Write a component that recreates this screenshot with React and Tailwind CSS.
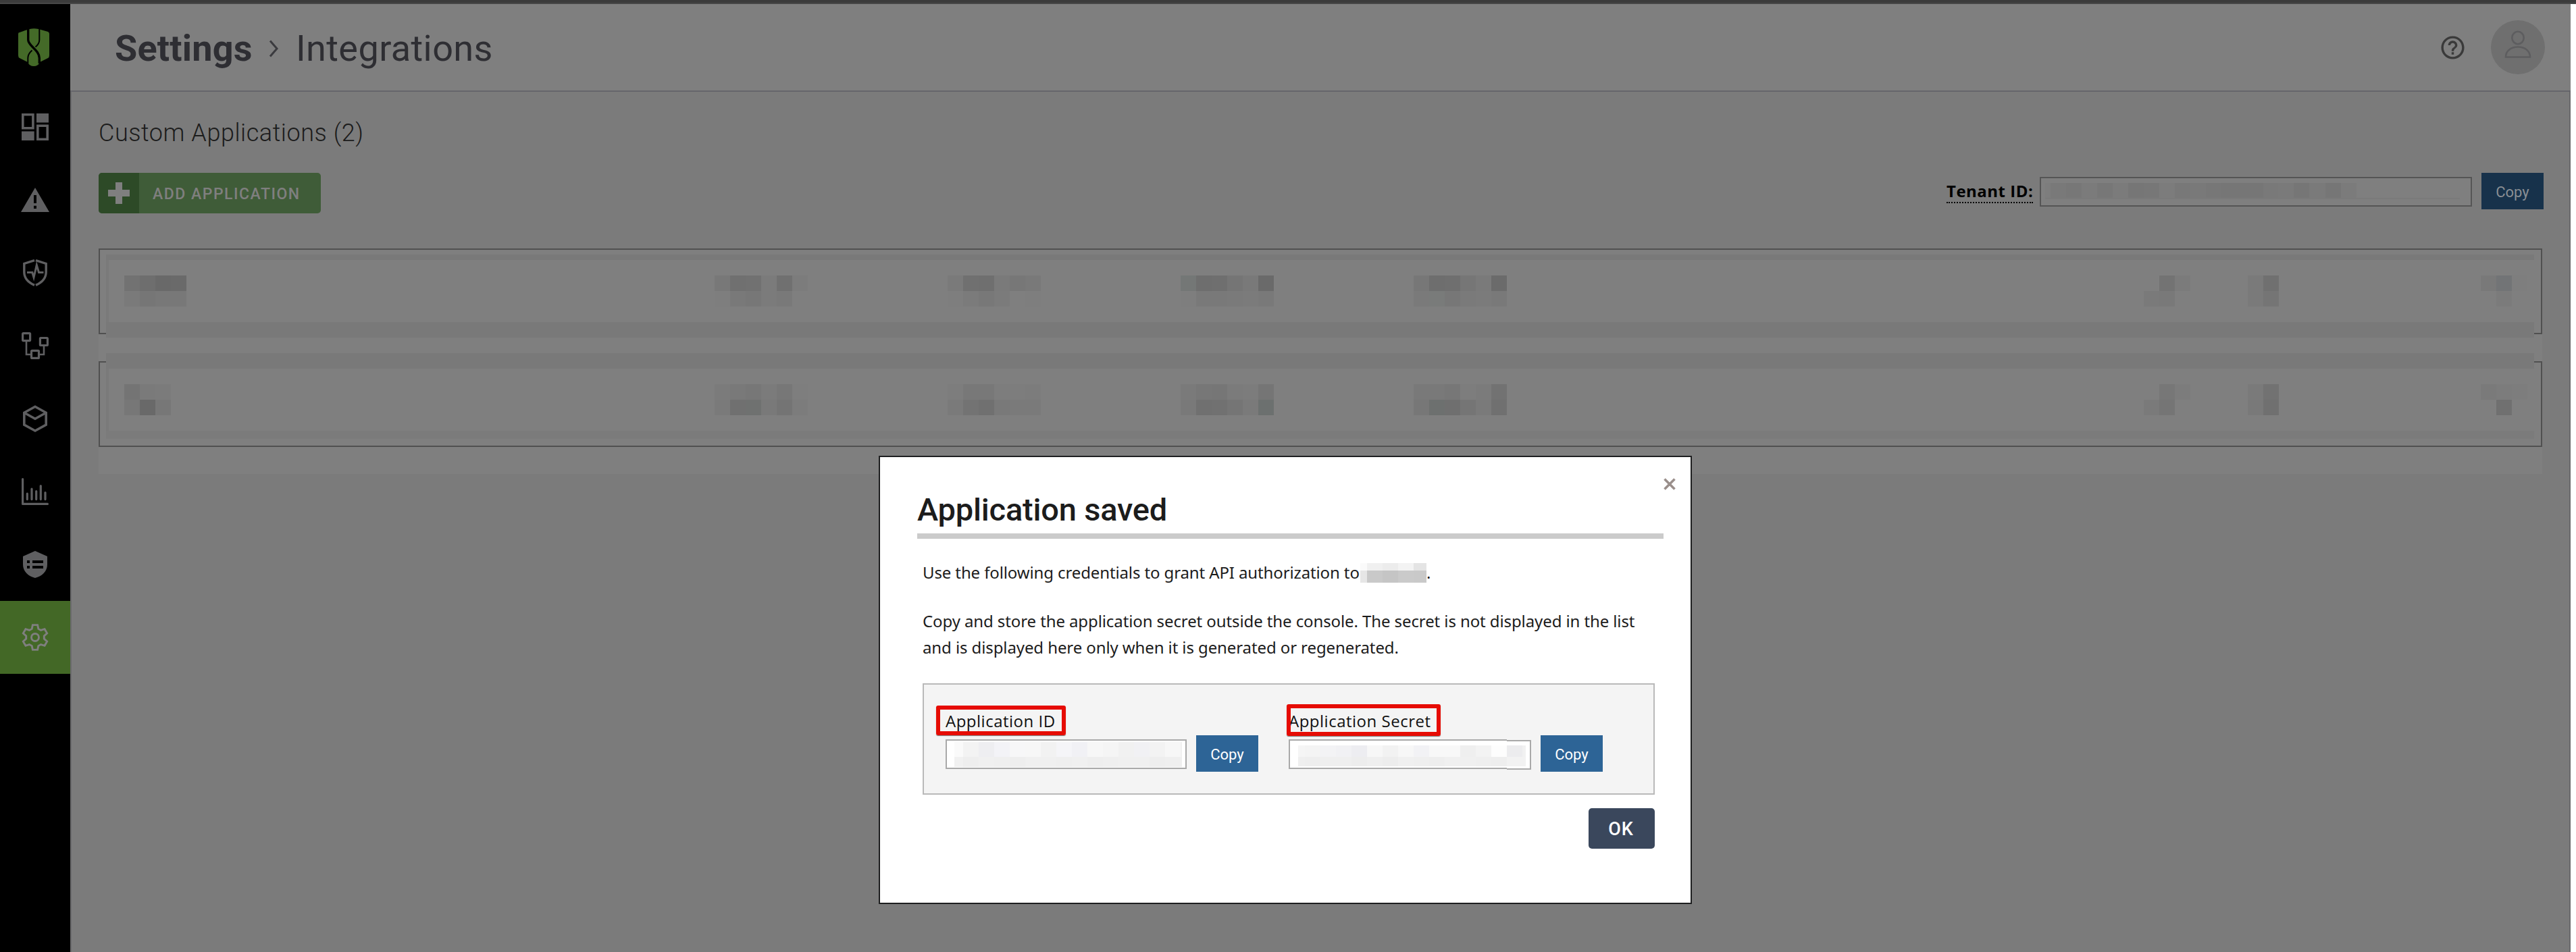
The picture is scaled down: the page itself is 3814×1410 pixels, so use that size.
import React, { useState } from 'react';
import { MdHelpOutline } from 'react-icons/md';

const COPY_FONT = "font-['Roboto',sans-serif]";

// Sidebar icons, all on a 48x48 grid
const navItems = [
  {
    name: 'dashboard',
    icon: (
      <>
        <path d="M4 30.5h18.7V44H4zM26 4h18v13.5H26z" fill="currentColor" />
        <path d="M5.8 5.8h15.1v20H5.8zM27.8 22.3h14.4v20H27.8z" fill="none" stroke="currentColor" strokeWidth="3.6" />
      </>
    ),
  },
  {
    name: 'alerts',
    icon: <path d="M24 6l21 36H3zM22 17v12h4V17zM22 32.8v4.2h4v-4.2z" fill="currentColor" fillRule="evenodd" />,
  },
  {
    name: 'enforce',
    icon: (
      <g fill="none" stroke="currentColor" strokeWidth="3.4">
        <path d="M23 5.6L7.8 10.4V23c0 9 6.5 15.5 15.2 19.4M25 5.6l15.2 4.8V23c0 9-6.5 15.5-15.2 19.4" />
        <path d="M12 23.6h7.8L22 31l4.3-18.5L29.5 23.6H36.5" strokeWidth="3" />
      </g>
    ),
  },
  {
    name: 'inbox',
    icon: (
      <g fill="none" stroke="currentColor" strokeWidth="3.2">
        <rect x="5.6" y="5.6" width="11" height="11" rx="1" />
        <rect x="31.4" y="12.5" width="11" height="11" rx="1" />
        <rect x="18.5" y="31.4" width="11" height="11" rx="1" />
        <path d="M11 17v20h7M37 24v13h-7" strokeWidth="2.6" />
      </g>
    ),
  },
  {
    name: 'inventory',
    icon: (
      <path
        d="M24 6.2l16.2 9v17.9L24 42 7.8 33.1V15.2zM7.8 15.2L24 24.2l16.2-9"
        fill="none"
        stroke="currentColor"
        strokeWidth="3.6"
      />
    ),
  },
  {
    name: 'reports',
    icon: (
      <path
        d="M5.6 5.6v36.8h36.8M12.3 27.2v8.4M19 20.2v15.4M25.7 23.6v12M32.3 15.6v20M39 25.6v10"
        fill="none"
        stroke="currentColor"
        strokeWidth="3.2"
        strokeLinecap="round"
        strokeLinejoin="round"
      />
    ),
  },
  {
    name: 'policies',
    icon: (
      <path
        d="M24 4l18 8v12c0 10-7.5 17.5-18 20C13.5 41.5 6 34 6 24V12zM12 18v4h4v-4zM20 18v4h16v-4zM12 26v4h4v-4zM20 26v4h16v-4z"
        fill="currentColor"
        fillRule="evenodd"
      />
    ),
  },
  {
    name: 'settings',
    active: true,
    icon: (
      <g fill="none" stroke="currentColor" strokeWidth="2.9" transform="translate(24 24)">
        <path d="M-4.8-12.6L-3.6-18.4H3.6L4.8-12.6 8.5-10.5 14.1-12.3 17.7-6.1 13.3-2.1V2.1L17.7 6.1 14.1 12.3 8.5 10.5 4.8 12.6 3.6 18.4H-3.6L-4.8 12.6-8.5 10.5-14.1 12.3-17.7 6.1-13.3 2.1V-2.1L-17.7-6.1-14.1-12.3-8.5-10.5z" />
        <circle r="5.5" />
      </g>
    ),
  },
];

// Pixelated values: start = gap before the group, top / bottom = cell colours
const maskedRows = [
  [
    { start: 23, top: ['#727272', '#6e6e6e', '#696969', '#6a6a6a'], bottom: ['#7a7a7a', '#767676', '#787878', '#787878'] },
    { start: 782, top: ['#787878', '#707070', '#717171', '#7b7b7b', '#707070', '#7c7c7c'], bottom: ['#7e7e7e', '#797979', '#777777', '#7b7b7b', '#797979', '#7f7f7f'] },
    { start: 207, top: ['#7a7a7a', '#707070', '#6f6f6f', '#7a7a7a', '#777777', '#797979'], bottom: ['#7e7e7e', '#7b7b7b', '#787878', '#7b7b7b', '#7f7f7f', '#7e7e7e'] },
    { start: 207, top: ['#747776', '#6e6e6e', '#6f6f6f', '#757575', '#797979', '#6a6a6a'], bottom: ['#7e7e7e', '#797979', '#797979', '#7a7a7a', '#7b7b7b', '#797979'] },
    { start: 207, top: ['#777777', '#6e6e6e', '#6f6f6f', '#767676', '#7a7a7a', '#6b6b6b'], bottom: ['#7a7a7a', '#797b7a', '#777777', '#7a7a7a', '#7b7b7b', '#797979'] },
    { start: 943, top: ['#7f7f7f', '#737373', '#7b7b7b'], bottom: ['#7a7a7a', '#797979', '#7f7f7f'] },
    { start: 85, top: ['#7a7a7a', '#707070'], bottom: ['#7a7a7a', '#757575'] },
    { start: 299, top: ['#797979', '#727476', '#7e7e7e'], bottom: ['#7f7f7f', '#7b7b7b', '#7f7f7f'] },
  ],
  [
    { start: 23, top: ['#747474', '#7a7a7a', '#7b7b7b'], bottom: ['#777777', '#696969', '#777777'] },
    { start: 805, top: ['#7b7b7b', '#797979', '#777777', '#7b7b7b', '#777777', '#7e7e7e'], bottom: ['#7a7a7a', '#707070', '#6f7170', '#797979', '#747474', '#7c7c7c'] },
    { start: 207, top: ['#7d7d7d', '#787878', '#787878', '#7d7d7d', '#7d7d7d', '#7c7c7c'], bottom: ['#7a7a7a', '#737373', '#707070', '#797979', '#7a7a7a', '#7a7a7a'] },
    { start: 207, top: ['#7a7a7a', '#777777', '#767676', '#7b7b7b', '#7c7c7c', '#757575'], bottom: ['#797979', '#707070', '#717171', '#757575', '#7a7a7a', '#6c706f'] },
    { start: 207, top: ['#797979', '#797979', '#777777', '#7d7d7d', '#7b7b7b', '#727272'], bottom: ['#777777', '#6d706f', '#6f6f6f', '#757575', '#7a7a7a', '#707070'] },
    { start: 943, top: ['#7f7f7f', '#777777', '#7c7c7c'], bottom: ['#7a7a7a', '#757575', '#7f7f7f'] },
    { start: 85, top: ['#7a7a7a', '#727272'], bottom: ['#797979', '#707070'] },
    { start: 299, top: ['#7a7a7a', '#7c7c7c', '#7d7d7d'], bottom: ['#7f7f7f', '#707070', '#7f7f7f'] },
  ],
];

const tenantCells = [
  [8, '#7d7d7d'], [23, '#797979'], [23, '#777777'], [23, '#7b7b7b'], [23, '#777777'], [23, '#7b7b7b'],
  [23, '#767676'], [23, '#777777'], [23, '#7c7c7c'], [23, '#787878'], [23, '#797979'], [23, '#777777'],
  [23, '#767676'], [23, '#767676'], [16, '#767676'], [22, '#797979'], [23, '#7a7a7a'], [23, '#767676'],
  [24, '#7a7a7a'], [23, '#767676'], [23, '#7b7b7b'],
];

const appIdCells = [
  [
    [13, '#fafafa'], [23, '#f3f3f3'], [23, '#eeeef1'], [23, '#f3f3f7'], [23, '#f7f7f8'], [23, '#f7f7f7'],
    [23, '#f2f2f2'], [23, '#f5f5f8'], [23, '#f1f1f5'], [23, '#f7f7f7'], [23, '#f5f5f5'], [23, '#f1f1f1'],
    [23, '#f1f1f4'], [23, '#f3f3f3'], [23, '#f7f7f7'], [2, '#f0f0f0'],
  ],
  [
    [13, '#f1f1f1'], [23, '#eeeeee'], [23, '#f0f0f0'], [23, '#efefef'], [23, '#eeeeee'], [23, '#f0f0f0'],
    [23, '#f0f0f0'], [23, '#efefef'], [23, '#f0f0f0'], [23, '#eeeeee'], [23, '#efefef'], [23, '#f0f0f0'],
    [23, '#f0f0f0'], [23, '#eeeeee'], [23, '#efefef'], [2, '#efefef'],
  ],
];

const secretCells = [
  [
    [10, '#f5f5f5'], [23, '#f4f4f4'], [23, '#f3f3f5'], [23, '#f1f1f4'], [23, '#ededf1'], [23, '#f7f7f7'],
    [23, '#f2f2f2'], [23, '#f7f7f7'], [23, '#f2f2f5'], [23, '#f8f8f8'], [23, '#f8f8f8'], [23, '#efefef'],
    [23, '#f3f3f3'], [23, '#fdfdfd'], [23, '#ececee'], [5, '#f1f1f1'],
  ],
  [
    [10, '#efefef'], [23, '#eeeeee'], [23, '#efefef'], [23, '#efefef'], [23, '#ededed'], [23, '#efefef'],
    [23, '#ededed'], [23, '#f0f0f0'], [23, '#efefef'], [23, '#eeeeee'], [23, '#f0f0f0'], [23, '#f0f0f0'],
    [23, '#efefef'], [23, '#eeeeee'], [23, '#f2f2f2'], [5, '#f2f2f2'],
  ],
];

const nameCells = [
  [[10, '#fafafa'], [23, '#f0f0f0'], [23, '#ececec'], [23, '#f3f3f3'], [19, '#e4e4e4']],
  [[10, '#e6e6e6'], [23, '#c9c9c9'], [23, '#c5c5c5'], [23, '#cacaca'], [19, '#c9c9c9']],
];

function Cells({ cells, className }) {
  return (
    <span className={`flex ${className}`}>
      {cells.map(([width, color], index) => (
        <span key={index} className="h-full shrink-0" style={{ width, backgroundColor: color }} />
      ))}
    </span>
  );
}

function MaskedRow({ groups }) {
  return (
    <div className="flex h-[92px] border-l-4 border-[#7a7a7a] bg-[#7f7f7f] pt-[23px]">
      {groups.map((group, index) => (
        <div key={index} className="shrink-0" style={{ marginLeft: group.start }}>
          <Cells cells={group.top.map((c) => [23, c])} className="h-[23px]" />
          <Cells cells={group.bottom.map((c) => [23, c])} className="h-[23px]" />
        </div>
      ))}
    </div>
  );
}

function Logo() {
  return (
    <svg width="46" height="56" viewBox="0 0 46 56">
      <path
        d="M2 6Q11 2.5 17 1Q23-.5 30 1L44 5Q46 6 46 8V40Q46 43 44 44L32 50Q29.5 56 23 56Q16.5 56 14 50L2 44Q0 43 0 40V8Q0 6 2 6z"
        fill="#446a28"
      />
      <g fill="none" stroke="#000">
        <path d="M14.7 0V17C14.7 26 31.3 32 31.3 44V52" strokeWidth="3.4" />
        <path d="M31.3 0V17Q31.3 23 25.5 27.5" strokeWidth="2" />
        <path d="M20.5 32.5Q14.3 38 14.3 44V52" strokeWidth="2" />
      </g>
    </svg>
  );
}

function Sidebar() {
  return (
    <aside className="flex w-[104px] shrink-0 flex-col bg-black">
      <div className="flex h-[128px] shrink-0 justify-center pt-9 pr-1">
        <Logo />
      </div>
      {navItems.map((item) => (
        <div
          key={item.name}
          className={
            item.active
              ? 'flex h-[108px] items-center justify-center bg-[#436826] text-[#7f7f7f]'
              : 'flex h-[108px] items-center justify-center text-[#5f5f61]'
          }
        >
          <svg width="48" height="48" viewBox="0 0 48 48">{item.icon}</svg>
        </div>
      ))}
    </aside>
  );
}

function Header() {
  return (
    <header className="flex h-[130px] items-center justify-between border-b-2 border-[#65656b] bg-[#7f7f7f] pr-[38px] pl-[66px] text-[#2e2e33]">
      <div className="flex items-center pt-[3px] font-['Roboto',sans-serif] text-[54px] leading-[60px]">
        <span className="w-[228px] font-bold tracking-[0.2px]">Settings</span>
        <svg width="15" height="26" viewBox="0 0 15 26" className="mr-[25px]">
          <path d="M2 1.5l10 11.5-10 11.5" fill="none" stroke="#3b3b3f" strokeWidth="3" />
        </svg>
        <span className="tracking-[0.4px]">Integrations</span>
      </div>
      <div className="flex items-center gap-[36px]">
        <MdHelpOutline size={41} color="#3a3a3a" />
        <div className="flex size-20 items-center justify-center rounded-full bg-[#6f6f6f]">
          <svg width="40" height="42" viewBox="0 0 40 42" className="mb-[8px]">
            <g fill="none" stroke="#5d5d5f" strokeWidth="2.6">
              <ellipse cx="20" cy="11" rx="8.7" ry="9.2" />
              <path d="M2 39.5C2 30 10 24.5 20 24.5S38 30 38 39.5z" />
            </g>
          </svg>
        </div>
      </div>
    </header>
  );
}

function Toolbar() {
  return (
    <div className="-mr-[2px] flex h-[60px] items-start justify-between">
      <button className="flex h-[60px] w-[329px] overflow-hidden rounded-[5px] bg-[#3f5c38] text-[#7f7f7f]">
        <span className="flex w-[60px] items-center justify-center self-stretch bg-[#2d4a27]">
          <svg width="32" height="32" viewBox="0 0 32 32">
            <path d="M11 0h10v11h11v10H21v11H11V21H0V11h11z" fill="currentColor" />
          </svg>
        </span>
        <span className="pl-5 font-['Roboto',sans-serif] text-[23px] leading-[63px] font-medium tracking-[1.5px]">
          ADD APPLICATION
        </span>
      </button>
      <div className="flex items-start">
        <span className="mt-[9px] mr-[10px] h-[36px] w-[128px] border-b-2 border-dotted border-black font-['Open_Sans',sans-serif] text-[24px] leading-[36px] font-bold tracking-[0.5px] whitespace-nowrap text-black">
          Tenant ID:
        </span>
        <div className="mt-[6px] h-[44px] w-[640px] border-2 border-[#555555] bg-[#7f7f7f] pt-[7px] pl-[6px]">
          <Cells cells={tenantCells} className="h-[22px]" />
          <div className="h-[2px] w-[614px] bg-[#7a7a7a]" />
        </div>
        <button className={`ml-[14px] h-[54px] w-[92px] bg-[#17324b] pt-[3px] text-[22px] text-[#8a8f94] ${COPY_FONT}`}>
          Copy
        </button>
      </div>
    </div>
  );
}

function ApplicationList() {
  return (
    <div className="relative mt-[52px] flex flex-col gap-[40px] bg-[#7f7f7f] pb-[40px]">
      <div className="h-[127px] border-2 border-[#505050]" />
      <div className="h-[127px] border-2 border-[#505050]" />
      <div className="absolute top-[9px] right-[12px] left-[11px]">
        <div className="h-[8px] bg-[#797979]" />
        <MaskedRow groups={maskedRows[0]} />
        <div className="h-[23px] bg-[#797979]" />
        <div className="h-[23px] bg-[#7f7f7f]" />
        <div className="h-[23px] bg-[#797979]" />
        <MaskedRow groups={maskedRows[1]} />
        <div className="h-[12px] bg-[#7b7b7b]" />
      </div>
    </div>
  );
}

function CopyButton() {
  return (
    <button className={`ml-[14px] h-[54px] w-[92px] bg-[#2d6496] pt-[3px] text-[22px] text-white ${COPY_FONT}`}>
      Copy
    </button>
  );
}

function Modal({ onClose }) {
  return (
    <div className="absolute top-[675px] right-2 left-0 flex justify-center">
      <div className="relative h-[664px] w-[1204px] border-2 border-[#1e1f20] bg-white pr-[40px] pl-[55px] text-[#1c1c1c]">
        <button onClick={onClose} className="absolute top-[31px] right-[22px]">
          <svg width="18" height="18" viewBox="0 0 18 18">
            <path d="M1.5 1.5l15 15M16.5 1.5l-15 15" stroke="#9a8f8b" strokeWidth="3.6" />
          </svg>
        </button>

        <h2 className="border-b-8 border-[#cbcbcb] pt-[48px] pb-[5px] font-['Roboto',sans-serif] text-[47px] leading-[60px] font-medium tracking-[-0.2px]">
          Application saved
        </h2>

        <div className="pr-[13px] pl-2">
          <div className="mt-[30px] flex h-[39px] font-['Noto_Sans',sans-serif] text-[24px] leading-[39px] tracking-[-0.12px] whitespace-nowrap">
            <span className="w-[648px]">Use the following credentials to grant API authorization to</span>
            <span className="mt-[6px]">
              <Cells cells={nameCells[0]} className="h-[11px]" />
              <Cells cells={nameCells[1]} className="h-[18px]" />
            </span>
            <span>.</span>
          </div>
          <p className="mt-[33px] font-['Noto_Sans',sans-serif] text-[24px] leading-[39px] tracking-[-0.1px] whitespace-nowrap">
            Copy and store the application secret outside the console. The secret is not displayed in the list
            <br />
            and is displayed here only when it is generated or regenerated.
          </p>

          <div className="mt-[34px] flex h-[165px] border-2 border-[#b9b9b9] bg-[#f4f4f4] pt-[38px] pl-[32px]">
            <div className="w-[508px]">
              <div className="relative h-[32px] font-['Open_Sans',sans-serif] text-[24px] leading-[32px] tracking-[0.5px] text-[#111111]">
                Application ID
                <span className="absolute -top-[7px] -left-[14px] h-[44px] w-[192px] rounded-[3px] border-6 border-[#e60c04] shadow-[0_1px_1px_#777]" />
              </div>
              <div className="mt-[5px] flex items-start">
                <div className="mt-[6px] h-[44px] w-[357px] border-2 border-[#a9a9a9] bg-white pt-[2px] pl-[11px]">
                  <Cells cells={appIdCells[0]} className="h-[22px]" />
                  <Cells cells={appIdCells[1]} className="h-[15px]" />
                </div>
                <CopyButton />
              </div>
            </div>
            <div>
              <div className="relative h-[32px] font-['Open_Sans',sans-serif] text-[24px] leading-[32px] tracking-[0.5px] text-[#111111]">
                Application Secret
                <span className="absolute -top-[9px] -left-[3px] h-[47px] w-[228px] rounded-[3px] border-6 border-[#e60c04] shadow-[0_1px_1px_#777]" />
              </div>
              <div className="mt-[5px] flex items-start">
                <div className="relative flex w-[359px] items-start">
                  <div className="mt-[6px] h-[44px] w-[323px] border-2 border-r-0 border-[#a9a9a9] bg-white" />
                  <div className="mt-[7px] h-[44px] w-[36px] border-2 border-l-0 border-[#a9a9a9] bg-white" />
                  <div className="absolute top-[15px] left-[14px]">
                    <Cells cells={secretCells[0]} className="h-[17px]" />
                    <Cells cells={secretCells[1]} className="h-[14px]" />
                  </div>
                </div>
                <CopyButton />
              </div>
            </div>
          </div>

          <div className="mt-5 flex justify-end">
            <button
              onClick={onClose}
              className="h-[60px] w-[98px] rounded-[5px] bg-[#3a475c] pt-[2px] pr-[2px] font-['Roboto',sans-serif] text-[27px] font-medium tracking-[0.8px] text-white"
            >
              OK
            </button>
          </div>
        </div>
      </div>
    </div>
  );
}

function App() {
  const [open, setOpen] = useState(true);

  return (
    <div className="relative h-[1410px] w-[3814px] overflow-hidden bg-white">
      <div className="h-[6px] border-b-2 border-[#474747] bg-[#3b3b3b]" />
      <div className="flex h-[1404px] w-[3806px]">
        <Sidebar />
        <div className="flex grow flex-col">
          <Header />
          <main className="grow border-x-2 border-[#6a6a6c] bg-[#7b7b7b] px-[40px]">
            <h1 className="h-[120px] font-['Roboto',sans-serif] text-[36px] leading-[122px] font-light tracking-[0.55px] text-[#1c1c1c]">
              Custom Applications (2)
            </h1>
            <Toolbar />
            <ApplicationList />
          </main>
        </div>
      </div>
      {open && <Modal onClose={() => setOpen(false)} />}
    </div>
  );
}

export default App;
